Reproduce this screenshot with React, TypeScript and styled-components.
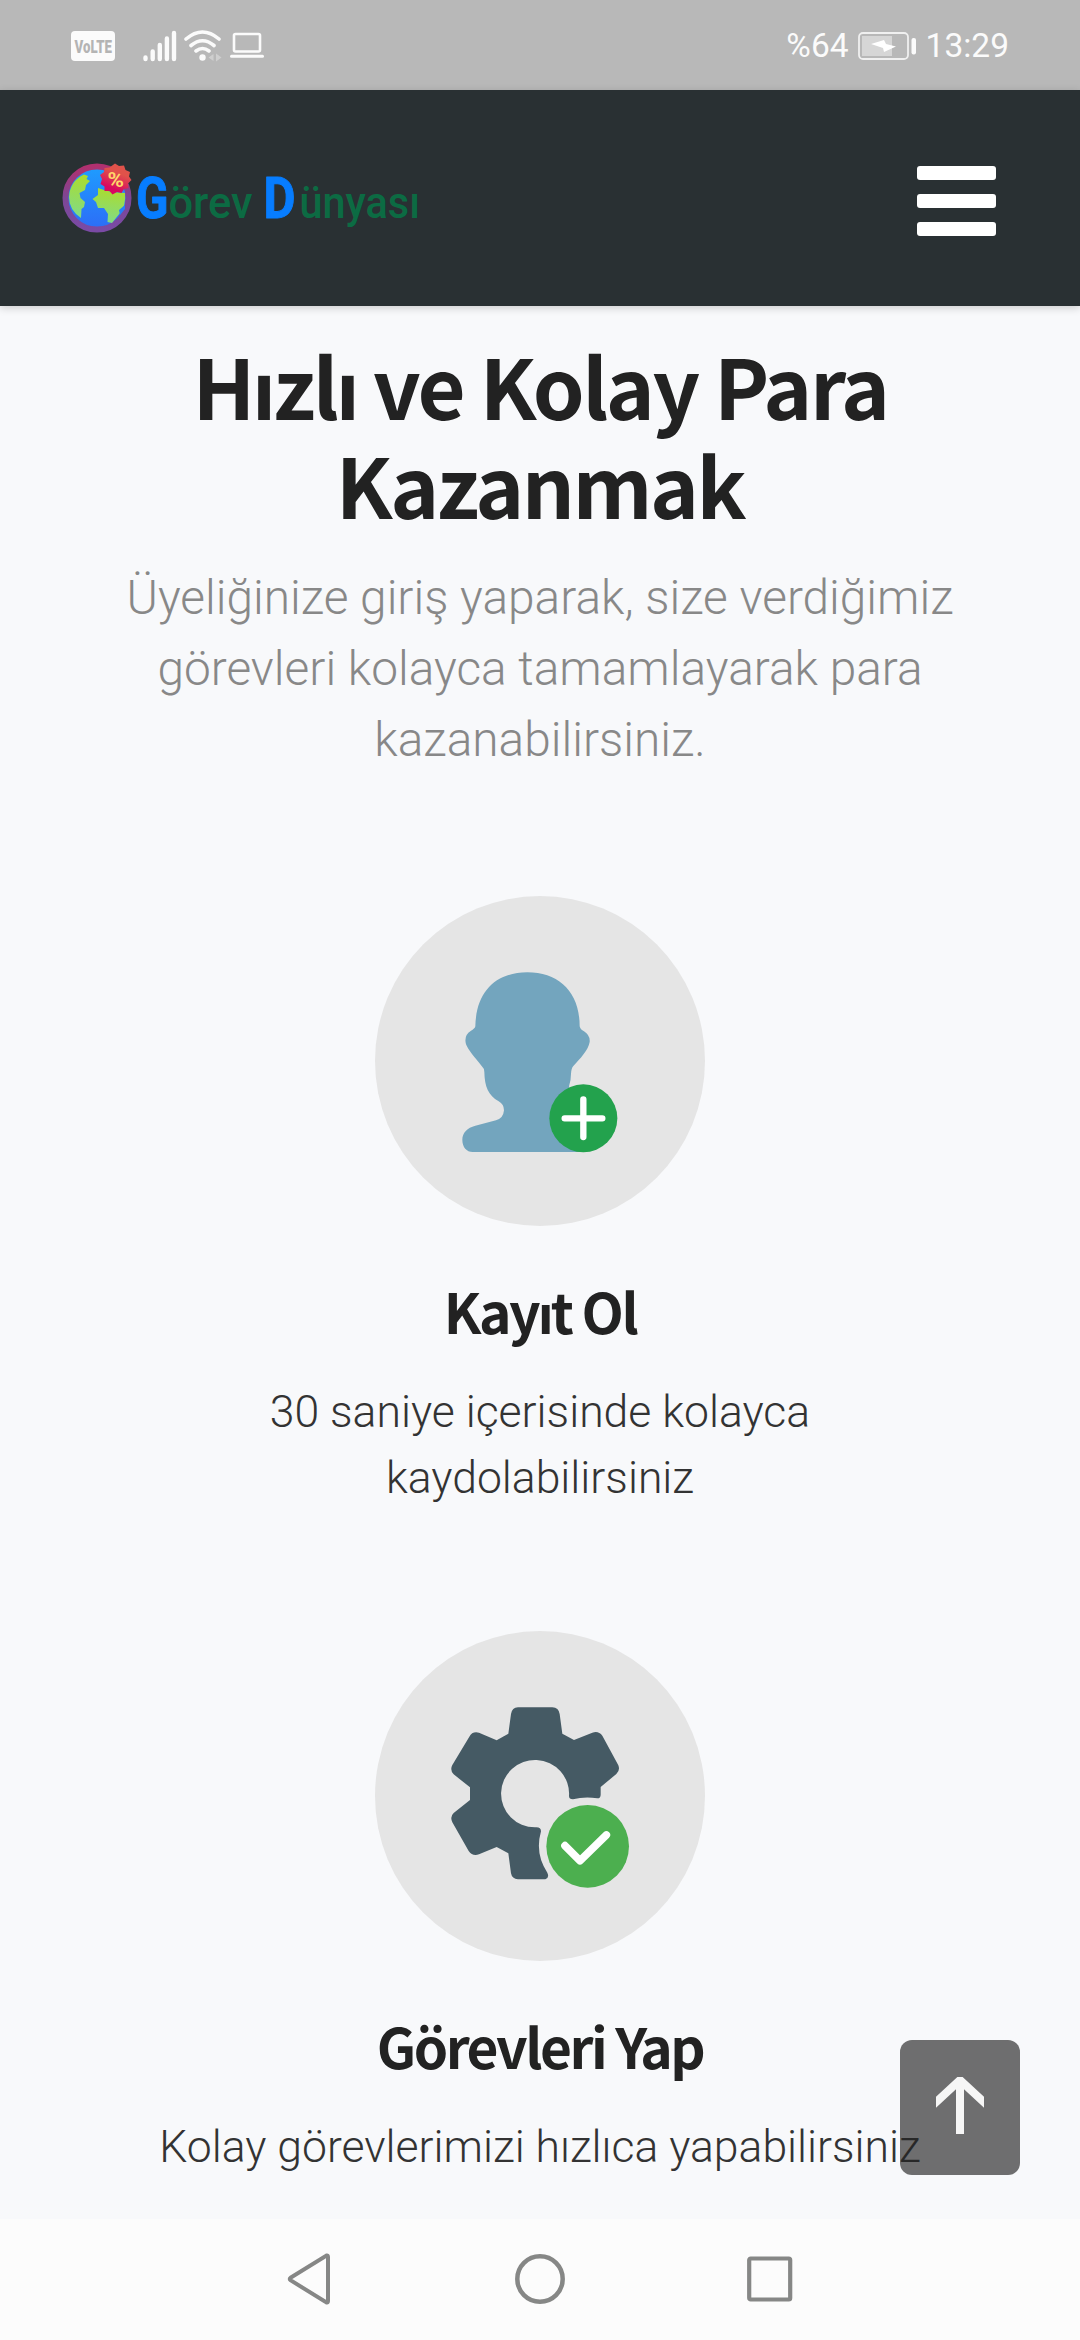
import React from "react";
import styled, { createGlobalStyle } from "styled-components";

const GlobalStyle = createGlobalStyle`
  *, *::before, *::after { box-sizing: border-box; }
  html, body { margin: 0; padding: 0; background: #f8f9fb; }
  h1, h2, p { margin: 0; }
`;

const Screen = styled.div`
  display: flex;
  flex-direction: column;
  width: 1080px;
  height: 2340px;
  overflow: hidden;
  position: relative;
  background: #f8f9fb;
  font-family: Roboto, "Liberation Sans", sans-serif;
`;

const StatusBar = styled.div`
  flex: none;
  height: 90px;
  padding: 1px 71px 0;
  display: flex;
  align-items: center;
  justify-content: space-between;
  background: #b8b8b8;
  color: #fbfbfb;
`;

const StatusGroup = styled.div<{ $gap: number }>`
  display: flex;
  align-items: center;
  gap: ${(p) => p.$gap}px;
`;

const StatusText = styled.span`
  font-size: 33.5px;
  line-height: 40px;
  white-space: nowrap;
`;

const VolteBadge = styled.svg`
  margin-right: 20px;
  overflow: visible;
`;

const Header = styled.header`
  flex: none;
  height: 216px;
  padding: 0 84px 0 60px;
  display: flex;
  align-items: center;
  justify-content: space-between;
  background: #293033;
  box-shadow: 0 2px 8px rgba(0, 0, 0, 0.18);
  z-index: 1;
`;

const MenuButton = styled.button`
  display: flex;
  flex-direction: column;
  gap: 14.8px;
  margin-top: 6px;
  padding: 0;
  border: 0;
  background: none;
`;

const MenuBar = styled.span`
  display: block;
  width: 79px;
  height: 13.4px;
  border-radius: 3px;
  background: #fff;
`;

const Main = styled.main`
  flex: 1;
  min-height: 0;
  display: flex;
  flex-direction: column;
  align-items: center;
  padding-top: 29px;
  text-align: center;
  overflow: hidden;
`;

const Heading = styled.h1`
  font-family: "Noto Sans CJK SC", Roboto, sans-serif;
  font-size: 83px;
  line-height: 99px;
  font-weight: 700;
  letter-spacing: -2.5px;
  color: #222;
  white-space: nowrap;
`;

const Lead = styled.p`
  margin-top: 30px;
  font-size: 47.8px;
  line-height: 71px;
  font-weight: 300;
  color: #888;
  white-space: nowrap;
`;

const Step = styled.section`
  margin-top: 120px;
  display: flex;
  flex-direction: column;
  align-items: center;
`;

const StepIcon = styled.div`
  width: 330px;
  height: 330px;
  border-radius: 50%;
  background: #e5e5e5;
  svg { display: block; }
`;

const StepTitle = styled.h2`
  margin-top: 51px;
  font-family: "Noto Sans CJK SC", Roboto, sans-serif;
  font-size: 55px;
  line-height: 66px;
  font-weight: 700;
  letter-spacing: -2.45px;
  color: #222;
  white-space: nowrap;
`;

const StepText = styled.p`
  margin-top: 36px;
  font-size: 44.5px;
  line-height: 66px;
  font-weight: 300;
  color: #333;
  white-space: nowrap;
`;

const ScrollTop = styled.button`
  position: absolute;
  left: 900px;
  top: 2040px;
  z-index: 2;
  width: 120px;
  height: 135px;
  padding: 0;
  border: 0;
  border-radius: 12px;
  background: rgba(35, 35, 35, 0.65);
  svg { display: block; }
`;

const NavBar = styled.nav`
  flex: none;
  height: 121px;
  padding: 0 285px 2px;
  display: flex;
  align-items: center;
  justify-content: space-between;
  background: #fcfcfc;
`;

const VolteIcon = () => (
  <VolteBadge width="44" height="30" viewBox="0 0 44 30">
    <rect width="44" height="30" rx="4" fill="#fbfbfb" />
    <text x="3.500" y="21.500" fontFamily="Roboto, sans-serif" fontWeight="900" fontSize="18.500" fill="#b4b4b4" textLength="37.500" lengthAdjust="spacingAndGlyphs">VoLTE</text>
  </VolteBadge>
);

const SignalIcon = () => (
  <svg width="34" height="32" viewBox="0 0 34 32" stroke="#fbfbfb" strokeWidth="4.400" strokeLinecap="round">
    <path d="M2.500 27.500V29M9.700 21.500V29M16.800 15V29M23.900 8.500V29M31 3V29" />
  </svg>
);

const WifiIcon = () => (
  <svg width="38" height="32" viewBox="0 0 38 32" fill="none" stroke="#fbfbfb" strokeWidth="3.600" strokeLinecap="round">
    <path d="M2 9Q18.500 -5 35 9M7 15.500Q18.500 6 30 15.500M12 21Q18.500 16 25 21" />
    <circle cx="18.500" cy="27.500" r="3.200" fill="#fbfbfb" stroke="none" />
    <path d="M29.500 24V31L24.500 27.500ZM32 23.500V31.500L37.500 27.500Z" fill="#cfcfcf" stroke="none" />
  </svg>
);

const LaptopIcon = () => (
  <svg width="34" height="27" viewBox="0.500 0 34 27" fill="none" stroke="#fbfbfb">
    <rect x="4.500" y="2" width="26" height="17.500" rx="1.500" strokeWidth="2.600" />
    <path d="M2 24.300H33" strokeWidth="3" strokeLinecap="round" />
  </svg>
);

const BatteryIcon = () => (
  <svg width="59" height="28" viewBox="0 0 59 28">
    <rect x="1" y="1" width="49" height="26" rx="4" fill="none" stroke="#f0f0f0" strokeWidth="1.800" />
    <rect x="4" y="4" width="30" height="20" fill="#d6d6d6" />
    <path d="M13 12L26 8L28 12L38 14.500L26 20L25 16Z" fill="#fff" />
    <rect x="53.500" y="6" width="4.500" height="16.500" rx="2" fill="#fbfbfb" />
  </svg>
);

const Logo = () => (
  <svg width="370" height="90" viewBox="60 153 370 90">
    <defs>
      <linearGradient id="ring" x1="0" y1="0" x2="0" y2="1">
        <stop offset="0" stopColor="#b0306f" />
        <stop offset="0.5" stopColor="#7d4795" />
        <stop offset="1" stopColor="#7a4aa5" />
      </linearGradient>
      <linearGradient id="sea" x1="0" y1="0" x2="0" y2="1">
        <stop offset="0" stopColor="#1e9dff" />
        <stop offset="1" stopColor="#2d6cf6" />
      </linearGradient>
      <linearGradient id="land" x1="0.3" y1="0" x2="0.2" y2="1">
        <stop offset="0" stopColor="#abdc2e" />
        <stop offset="1" stopColor="#7fdb8a" />
      </linearGradient>
      <linearGradient id="seal" x1="0.7" y1="0" x2="0.3" y2="1">
        <stop offset="0.3" stopColor="#e0524a" />
        <stop offset="0.8" stopColor="#d8095f" />
      </linearGradient>
    </defs>
    <circle cx="97" cy="198" r="31.500" fill="url(#sea)" stroke="url(#ring)" strokeWidth="6" />
    <path d="M84 174.500L88 176L86.500 179L90 181L86 185L85 190L79.500 193L80.500 198L85 202L84 207L81.500 209L81 218Q69 210 69 197Q70 181 84 174.500Z" fill="url(#land)" />
    <path d="M98 188L104 190L112 192L125 193Q126 206 120 213L112 223L107.500 222L108 214L104 208H98L96 202L92.500 199L98 195Z" fill="url(#land)" />
    <path d="M125 205L119 210L120 215L125 209Z" fill="#267ff8" />
    <path d="M115 163.500L119 166L124 165.500L125.500 170L130 172L129 176.500L131.500 180L128 183.500L128.500 188L124 189L121.500 193L117 192L112.500 194.500L109.500 191L104.500 191L104.500 186.500L100.500 184L102 179L100 175L104 172L104.500 168L109.500 167.500Z" fill="url(#seal)" />
    <text x="107.500" y="186.500" fontFamily="Roboto, sans-serif" fontWeight="700" fontSize="20" fill="#ffd76a" textLength="16.500" lengthAdjust="spacingAndGlyphs">%</text>
    <g fontFamily="Roboto, sans-serif">
      <g fontWeight="700" fontSize="57.500" fill="#077dff" stroke="#077dff" strokeWidth="1" strokeLinejoin="round">
        <text x="136" y="217.500" textLength="32.500" lengthAdjust="spacingAndGlyphs">G</text>
        <text x="263.500" y="217.500" textLength="32" lengthAdjust="spacingAndGlyphs">D</text>
      </g>
      <g fontWeight="500" fontSize="43.500" fill="#0c6b43">
        <text x="168.500" y="217.500" textLength="84" lengthAdjust="spacingAndGlyphs">örev</text>
        <text x="299.500" y="217.500" textLength="120.500" lengthAdjust="spacingAndGlyphs">ünyası</text>
      </g>
    </g>
  </svg>
);

const UserPlusIcon = () => (
  <svg width="330" height="330" viewBox="15 17 990 990">
    <path
      fill="#73a5be"
      d="M472 246C567 246 629 305 629 408Q631 418 642 423Q661 435 659 455C655 480 630 505 610 527Q604 533 603 550Q603 570 597 588L640 785H308C290 785 277 770 277 748C277 727 292 712 316 706L378 690Q400 684 402 660Q402 642 386 633C355 615 344 590 343 545Q343 534 335 527C315 502 295 480 288 462Q281 435 302 422Q315 415 316 408C318 305 377 246 472 246Z"
    />
    <circle cx="640" cy="684" r="102" fill="#23a24d" />
    <path d="M584 684H697M640 627V740" stroke="#fff" strokeWidth="19" strokeLinecap="round" />
  </svg>
);

const GearCheckIcon = () => (
  <svg width="330" height="330" viewBox="15 17 990 990">
    <path
      fill="#455a64"
      d="M444 246H547Q566 247 569 266L577 325L612 344L667 322Q686 316 697 331L745 420Q751 435 739 446L692 485V508Q692 519 682 519Q643 513 609 522Q597 522 597 512A102 101 0 1 0 495 606Q513 604 513 618Q494 685 532 742Q539 757 526 762H444Q426 761 423 744L415 684L380 665L327 687Q307 693 296 677L247 591Q239 574 251 563L300 524V486L251 447Q239 434 247 419L298 334Q307 317 327 322L380 345L415 325L423 266Q426 247 444 246Z"
    />
    <circle cx="653" cy="663" r="124" fill="#4caf4f" />
    <path d="M585 661L630 706L709 629" fill="none" stroke="#fff" strokeWidth="23" strokeLinecap="round" strokeLinejoin="round" />
  </svg>
);

const ArrowUpIcon = () => (
  <svg width="120" height="135" viewBox="0 0 120 135">
    <defs>
      <clipPath id="arrowBox"><rect x="36" y="37" width="48" height="57" /></clipPath>
    </defs>
    <path clipPath="url(#arrowBox)" d="M60 44V100M32 66L60 40L88 66" fill="none" stroke="#f6f6f6" strokeWidth="8" />
  </svg>
);

const BackIcon = () => (
  <svg width="48" height="54" viewBox="0 0 48 54">
    <path d="M5.500 25.800L41.500 3.500Q43 3 43 5V49Q43 51 41.500 50.500L5.500 28.200Q4 27 5.500 25.800Z" fill="none" stroke="#868786" strokeWidth="4" />
  </svg>
);

const HomeIcon = () => (
  <svg width="54" height="54" viewBox="0 0 54 54">
    <circle cx="27" cy="27" r="22.700" fill="none" stroke="#868786" strokeWidth="4.500" />
  </svg>
);

const RecentsIcon = () => (
  <svg width="48" height="54" viewBox="0 0 48 54">
    <rect x="2.200" y="6.500" width="41" height="41" rx="1.500" fill="none" stroke="#868786" strokeWidth="4.200" />
  </svg>
);

export default function App() {
  return (
    <Screen>
      <GlobalStyle />
      <StatusBar>
        <StatusGroup $gap={7.5}>
          <VolteIcon />
          <SignalIcon />
          <WifiIcon />
          <LaptopIcon />
        </StatusGroup>
        <StatusGroup $gap={9}>
          <StatusText>%64</StatusText>
          <BatteryIcon />
          <StatusText>13:29</StatusText>
        </StatusGroup>
      </StatusBar>
      <Header>
        <Logo />
        <MenuButton aria-label="Menü">
          <MenuBar />
          <MenuBar />
          <MenuBar />
        </MenuButton>
      </Header>
      <Main>
        <Heading>
          Hızlı ve Kolay Para
          <br />
          Kazanmak
        </Heading>
        <Lead>
          Üyeliğinize giriş yaparak, size verdiğimiz
          <br />
          görevleri kolayca tamamlayarak para
          <br />
          kazanabilirsiniz.
        </Lead>
        <Step>
          <StepIcon><UserPlusIcon /></StepIcon>
          <StepTitle>Kayıt Ol</StepTitle>
          <StepText>
            30 saniye içerisinde kolayca
            <br />
            kaydolabilirsiniz
          </StepText>
        </Step>
        <Step>
          <StepIcon><GearCheckIcon /></StepIcon>
          <StepTitle>Görevleri Yap</StepTitle>
          <StepText>Kolay görevlerimizi hızlıca yapabilirsiniz</StepText>
        </Step>
      </Main>
      <ScrollTop aria-label="Yukarı"><ArrowUpIcon /></ScrollTop>
      <NavBar>
        <BackIcon />
        <HomeIcon />
        <RecentsIcon />
      </NavBar>
    </Screen>
  );
}
